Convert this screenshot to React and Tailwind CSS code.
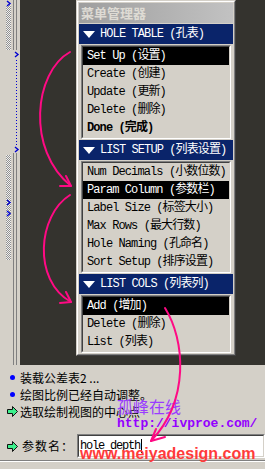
import React from "react";

const mono = "font-['Liberation_Mono','Noto_Sans_CJK_SC',monospace]";

function LeftStrip() {
  const chev = (x, y) => (
    <path d={`M${x} ${y} l3 2.5 l-3 2.5`} stroke="#0000d0" strokeWidth="1.4" fill="none" />
  );
  return (
    <svg width="20" height="365" className="shrink-0 block">
      <defs>
        <pattern id="grip" width="2" height="2" patternUnits="userSpaceOnUse">
          <rect width="2" height="2" fill="#f0f0f0" />
          <rect width="1" height="1" fill="#909090" />
          <rect x="1" y="1" width="1" height="1" fill="#909090" />
        </pattern>
      </defs>
      <rect width="20" height="365" fill="#d4d0c8" />
      {/* grips */}
      <rect x="6" y="5" width="5" height="45" fill="url(#grip)" />
      <rect x="6" y="155" width="5" height="105" fill="url(#grip)" />
      {/* vertical rails */}
      <rect x="13" y="0" width="1" height="50" fill="#808080" />
      <rect x="16" y="0" width="1" height="50" fill="#808080" />
      <rect x="13" y="153" width="1" height="212" fill="#808080" />
      <rect x="16" y="153" width="1" height="212" fill="#808080" />
      {/* blue dotted line */}
      <line x1="16.5" y1="60" x2="16.5" y2="147" stroke="#0000d0" strokeWidth="1" strokeDasharray="1 2" />
      {chev(7, 1)}
      {chev(15, 52)}
      {chev(15, 147)}
      {chev(7, 200)}
      {chev(7, 211)}
    </svg>
  );
}

function Header({ children }) {
  return (
    <div className="h-[20px] mt-px bg-[#0a246a] flex items-center text-white">
      <svg width="12" height="7" className="ml-[4px] shrink-0">
        <polygon points="0,0 12,0 6,7" fill="#fff" />
      </svg>
      <span className="ml-[5px] whitespace-nowrap">{children}</span>
    </div>
  );
}

function ListBox({ items }) {
  return (
    <div className="mx-[2px] mt-px border border-t-[#808080] border-l-[#808080] border-b-white border-r-white">
      <div className="border border-t-[#404040] border-l-[#404040] border-b-[#d4d0c8] border-r-[#d4d0c8]">
        {items.map((it) => (
          <div
            key={it.t}
            className={`h-[18px] flex items-center pl-[4px] whitespace-nowrap ${
              it.sel ? "bg-black text-white" : "text-black"
            } ${it.bold ? "font-bold" : ""}`}
          >
            {it.t}
          </div>
        ))}
      </div>
    </div>
  );
}

function Panel() {
  return (
    <div className={`w-[160px] border border-t-[#d4d0c8] border-l-[#d4d0c8] border-r-[#404040] border-b-[#404040] ${mono} text-[12px] tracking-[-0.9px]`}>
      <div className="border border-t-white border-l-white border-r-[#808080] border-b-[#808080] p-px bg-[#d4d0c8]">
        <div className="h-[20px] bg-linear-to-r from-[#9e9e9e] to-[#c2c2c2] flex items-center pl-[2px] font-['Noto_Sans_CJK_SC',sans-serif] font-bold text-[13px] tracking-normal text-[#dedbd4]">
          菜单管理器
        </div>
        <Header>HOLE TABLE (孔表)</Header>
        <ListBox
          items={[
            { t: "Set Up (设置)", sel: true },
            { t: "Create (创建)" },
            { t: "Update (更新)" },
            { t: "Delete (删除)" },
            { t: "Done (完成)", bold: true },
          ]}
        />
        <Header>LIST SETUP (列表设置)</Header>
        <ListBox
          items={[
            { t: "Num Decimals (小数位数)" },
            { t: "Param Column (参数栏)", sel: true },
            { t: "Label Size (标签大小)" },
            { t: "Max Rows (最大行数)" },
            { t: "Hole Naming (孔命名)" },
            { t: "Sort Setup (排序设置)" },
          ]}
        />
        <Header>LIST COLS (列表列)</Header>
        <ListBox
          items={[
            { t: "Add (增加)", sel: true },
            { t: "Delete (删除)" },
            { t: "List (列表)" },
          ]}
        />
      </div>
    </div>
  );
}

function GreenArrow() {
  return (
    <svg width="11" height="11" className="block">
      <polygon points="0.5,3.5 5.5,3.5 5.5,0.5 10.5,5.5 5.5,10.5 5.5,7.5 0.5,7.5" fill="#3cf08c" stroke="#111" strokeWidth="1" />
    </svg>
  );
}

export default function App() {
  return (
    <div className="w-[265px] h-[469px] bg-[#d4d0c8] relative overflow-hidden">
      <div className="flex h-[365px]">
        <LeftStrip />
        <div className="flex-1 bg-[#34332e] pl-[56px]">
          <Panel />
        </div>
      </div>

      <div className="font-['Noto_Sans_CJK_SC',sans-serif] text-[12px] text-black">
        <div className="pt-[4px]">
          <div className="h-[17px] flex items-center">
            <div className="w-[20px] flex justify-center pl-[5px]">
              <div className="w-[5px] h-[5px] rounded-full bg-[#0000ff]" />
            </div>
            <span>装载公差表2 ...</span>
          </div>
          <div className="h-[17px] flex items-center">
            <div className="w-[20px] flex justify-center pl-[5px]">
              <div className="w-[5px] h-[5px] rounded-full bg-[#0000ff]" />
            </div>
            <span>绘图比例已经自动调整。</span>
          </div>
          <div className="h-[17px] flex items-center">
            <div className="w-[20px] pl-[7px]">
              <GreenArrow />
            </div>
            <span>选取绘制视图的中心点</span>
          </div>
        </div>
        <div className="mt-[14px] h-[24px] flex items-center">
          <div className="w-[22px] pl-[7px]">
            <GreenArrow />
          </div>
          <span className="tracking-[1px] w-[55px]">参数名：</span>
          <div className="flex-1 h-[24px] bg-white border border-t-[#808080] border-l-[#808080] border-b-white border-r-white">
            <div className="h-full border border-t-[#404040] border-l-[#404040] border-b-[#d4d0c8] border-r-[#d4d0c8] flex items-center pl-[1px]">
              <span className={`${mono} text-[12px] tracking-[-1.2px]`}>hole_depth</span>
              <span className="w-px h-[14px] bg-black ml-[1px]" />
            </div>
          </div>
        </div>
        <div className="mt-[2px] border-t border-t-[#808080] border-b border-b-white" />
      </div>

      {/* watermarks */}
      <div className="absolute left-[117px] top-[396px] font-['Noto_Sans_CJK_SC',sans-serif] text-[16px] leading-[20px] text-[#9a3cff]">
        孤峰在线
      </div>
      <div className="absolute left-[117px] top-[416px] font-['Liberation_Mono',monospace] font-bold text-[13px] leading-[16px] text-[#9400ff]">
        http://ivproe.com/
      </div>
      <div className="absolute left-[80px] top-[445px] font-['Liberation_Sans',sans-serif] font-bold text-[16px] leading-[18px] text-[#ff3b3b]">
        www.meiyadesign.com
      </div>

      {/* callout arrows */}
      <svg className="absolute inset-0 pointer-events-none" width="265" height="469">
        <g stroke="#ff0a84" strokeWidth="2" fill="none" strokeLinecap="round">
          <path d="M70 52 C34 72 26 150 71 186" />
          <path d="M71 186 L66 176 M71 186 L60 186" />
          <path d="M70 195 C38 215 32 280 71 302" />
          <path d="M71 302 L66 292 M71 302 L60 303" />
          <path d="M165 308 C185 340 190 400 151 441" />
          <path d="M151 441 L165 437 M151 441 L156 429" />
        </g>
      </svg>
    </div>
  );
}
